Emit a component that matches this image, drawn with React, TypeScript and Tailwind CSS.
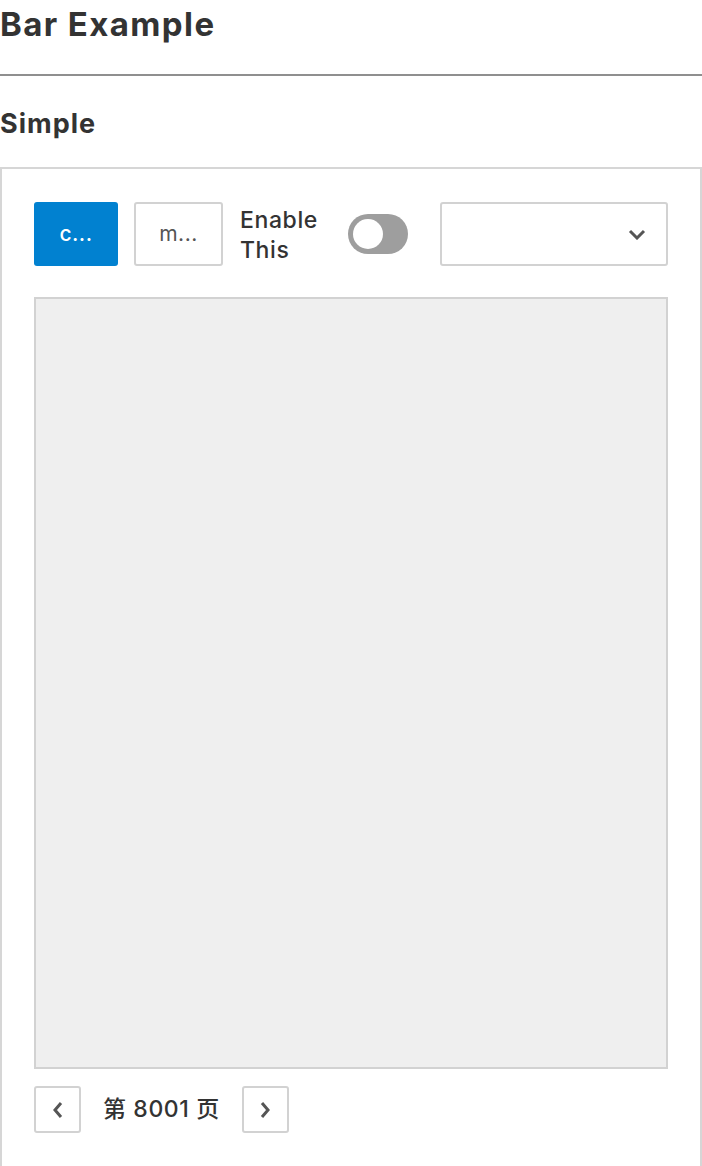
import { useState } from "react";

function Chevron({ dir, className }: { dir: "left" | "right" | "down"; className?: string }) {
    const d = dir === "left" ? "M9 1 L3 8 L9 15" : dir === "right" ? "M3 1 L9 8 L3 15" : "M2 2 L9 9 L16 2";
    const vb = dir === "down" ? "0 0 18 11" : "0 0 12 16";
    return (
        <svg viewBox={vb} className={className} fill="none" stroke="#555" strokeWidth={3} strokeLinecap="butt">
            <path d={d} />
        </svg>
    );
}

function App() {
    const [enabled, setEnabled] = useState<boolean>(false);
    const [page, setPage] = useState<number>(8001);

    return (
        <div className="w-[702px] bg-white text-[#333] font-['Inter','Noto_Sans_CJK_SC',sans-serif]">
            <h1 className="text-[33px] font-bold leading-[48px] tracking-[1.4px]">Bar Example</h1>
            <hr className="mt-[26px] border-0 border-t-2 border-[#8f8f8f]" />
            <h2 className="mt-[30px] text-[27px] font-bold leading-[36px] tracking-[1px]">Simple</h2>
            <div className="mt-[25px] border-2 border-[#d6d6d6] px-[32px] pt-[33px] pb-[40px]">
                {/* -----TOOLBAR----- */}
                <div className="flex items-center h-[64px]">
                    <button className="w-[84px] h-[64px] rounded-[3px] bg-[#0181d0] text-white text-[21px] tracking-[0.5px] font-medium">c...</button>
                    <button className="ml-[16px] w-[89px] h-[64px] rounded-[3px] border-2 border-[#d2d2d2] bg-white text-[#555] text-[21px] tracking-[0.5px]">m...</button>
                    <div className="ml-[17px] w-[90px] text-[23px] font-medium leading-[30px] tracking-[0.6px] pt-[2px]">
                        Enable
                        <br />
                        This
                    </div>
                    <button
                        onClick={() => setEnabled((prev) => !prev)}
                        className={`ml-[18px] w-[60px] h-[40px] rounded-full p-[5px] flex ${enabled ? "bg-[#0181d0] justify-end" : "bg-[#9e9e9e] justify-start"}`}
                    >
                        <span className="block w-[30px] h-[30px] rounded-full bg-white" />
                    </button>
                    <div className="ml-[32px] flex-1 h-[64px] rounded-[3px] border-2 border-[#d2d2d2] flex items-center justify-end pr-[20px]">
                        <Chevron dir="down" className="w-[18px] h-[11px]" />
                    </div>
                </div>
                {/* -----CHART AREA----- */}
                <div className="mt-[31px] h-[772px] bg-[#efefef] border-2 border-[#d2d2d2]"></div>
                {/* -----PAGINATION----- */}
                <div className="mt-[17px] flex items-center">
                    <button onClick={() => setPage((prev) => prev - 1)} className="w-[47px] h-[47px] rounded-[3px] border-2 border-[#d2d2d2] flex items-center justify-center">
                        <Chevron dir="left" className="w-[12px] h-[16px]" />
                    </button>
                    <span className="mx-[22px] text-[23px] font-medium tracking-[0.6px]">第 {page} 页</span>
                    <button onClick={() => setPage((prev) => prev + 1)} className="w-[47px] h-[47px] rounded-[3px] border-2 border-[#d2d2d2] flex items-center justify-center">
                        <Chevron dir="right" className="w-[12px] h-[16px]" />
                    </button>
                </div>
            </div>
        </div>
    );
}

export default App;
